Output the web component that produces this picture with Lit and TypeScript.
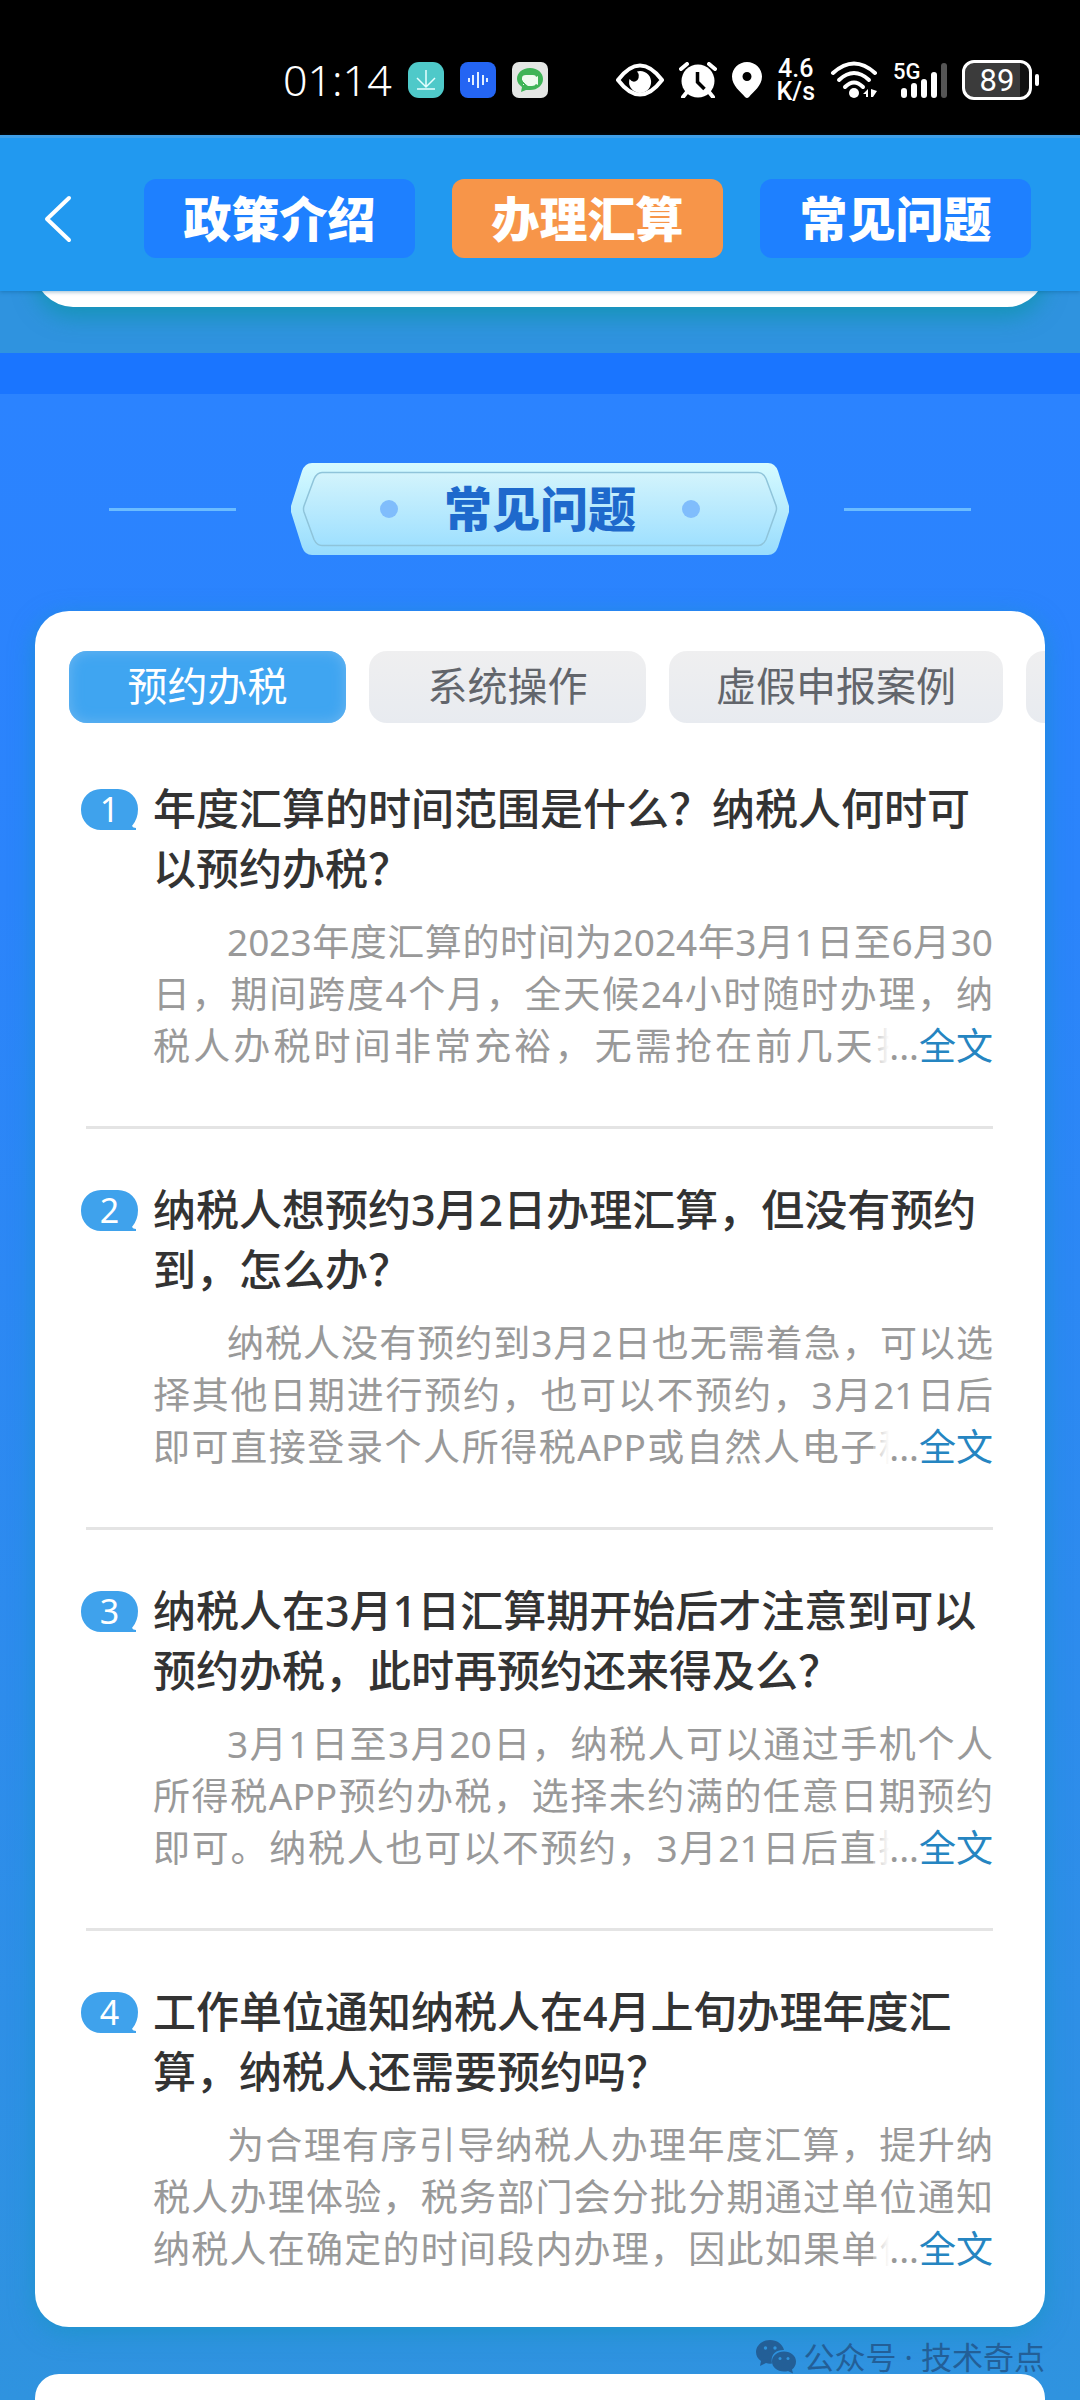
import { LitElement, html, css } from "lit";
import { customElement, property, state } from "lit/decorators.js";
import { classMap } from "lit/directives/class-map.js";

interface Faq {
  title: string[];
  body: string[];
}

const FAQS: Faq[] = [
  {
    title: ["年度汇算的时间范围是什么？纳税人何时可", "以预约办税？"],
    body: [
      "2023年度汇算的时间为2024年3月1日至6月30",
      "日，期间跨度4个月，全天候24小时随时办理，纳",
      "税人办税时间非常充裕，无需抢在前几天扎堆预",
    ],
  },
  {
    title: ["纳税人想预约3月2日办理汇算，但没有预约", "到，怎么办？"],
    body: [
      "纳税人没有预约到3月2日也无需着急，可以选",
      "择其他日期进行预约，也可以不预约，3月21日后",
      "即可直接登录个人所得税APP或自然人电子税务局",
    ],
  },
  {
    title: ["纳税人在3月1日汇算期开始后才注意到可以", "预约办税，此时再预约还来得及么？"],
    body: [
      "3月1日至3月20日，纳税人可以通过手机个人",
      "所得税APP预约办税，选择未约满的任意日期预约",
      "即可。纳税人也可以不预约，3月21日后直接登录",
    ],
  },
  {
    title: ["工作单位通知纳税人在4月上旬办理年度汇", "算，纳税人还需要预约吗？"],
    body: [
      "为合理有序引导纳税人办理年度汇算，提升纳",
      "税人办理体验，税务部门会分批分期通过单位通知",
      "纳税人在确定的时间段内办理，因此如果单位通知",
    ],
  },
];

@customElement("status-bar")
class StatusBar extends LitElement {
  static styles = css`
    :host {
      display: flex;
      align-items: center;
      justify-content: space-between;
      height: 135px;
      padding: 24px 41px 0 283px;
      box-sizing: border-box;
      background: #000;
      color: #fff;
      font-family: "Noto Sans", "Roboto", sans-serif;
    }
    .group {
      display: flex;
      align-items: center;
      gap: 16px;
    }
    .time {
      font-size: 43px;
      line-height: 48px;
      font-weight: 300;
    }
    .right {
      gap: 15px;
    }
    .speed {
      font-family: "Roboto", sans-serif;
      font-size: 25px;
      line-height: 23px;
      font-weight: 500;
      text-align: center;
    }
    svg {
      display: block;
    }
    .battery {
      display: flex;
      align-items: center;
      gap: 3px;
    }
    .cell {
      box-sizing: border-box;
      width: 70px;
      height: 40px;
      border: 3px solid #fff;
      border-radius: 12px;
      background: linear-gradient(90deg, #3b3b3b 86%, #111 86%);
      font-family: "Roboto", sans-serif;
      font-size: 31px;
      line-height: 35px;
      text-align: center;
    }
    .nub {
      width: 4px;
      height: 12px;
      border-radius: 2px;
      background: #fff;
    }
    .gen {
      font: 500 22px "Roboto", sans-serif;
      fill: #fff;
    }
  `;

  render() {
    return html`
      <div class="group">
        <span class="time">01:14</span>
        <svg width="36" height="36" viewBox="0 0 36 36">
          <rect width="36" height="36" rx="11" fill="#4fc9c9" />
          <path d="M18 8v16M9 16l9 9 9-9M9 27h18" fill="none" stroke="#e6ffff" stroke-width="1.5" />
        </svg>
        <svg width="36" height="36" viewBox="0 0 36 36">
          <rect width="36" height="36" rx="8" fill="#2465f3" />
          <path d="M9 16v4M13 13v10M18 10v16M23 13v10M27 16v4" stroke="#e2efff" stroke-width="2" />
        </svg>
        <svg width="36" height="36" viewBox="0 0 36 36">
          <rect width="36" height="36" rx="7" fill="#e4e6e4" />
          <path d="M18 6c8 0 13 5 13 11s-5 11-13 11l-4 0-5 2 1-5c-3-2-5-5-5-8C5 11 10 6 18 6z" fill="#3fb457" />
          <path d="M10 16q0-3 4-3h7q3 0 3 2l2-1v9l-2-1q-1 2-4 2h-4q-2-1-3-3l-3-3z" fill="#effbf0" />
          <path d="M11 19l3 3M11 22l1 1" stroke="#effbf0" stroke-width="1" />
        </svg>
      </div>
      <div class="group right">
        <svg width="48" height="36" viewBox="0 0 48 36">
          <path d="M2 18C11 6 18 3.500 24 3.500S37 6 46 18C37 30 30 32.500 24 32.500S11 30 2 18z" fill="none" stroke="#fff" stroke-width="4" stroke-linejoin="round" />
          <path d="M24 9a11 11 0 1 1-10.500 8q4 5 8 1 3-5-.5-8.600Q22.500 9 24 9z" fill="#fff" />
        </svg>
        <svg width="38" height="36" viewBox="0 0 38 36">
          <circle cx="19" cy="19" r="16.500" fill="#fff" />
          <path d="M2 7l6-5M36 7l-6-5M8 30l-4 5M30 30l4 5" stroke="#fff" stroke-width="4" stroke-linecap="round" />
          <path d="M18.500 10v10l7 7" fill="none" stroke="#000" stroke-width="3.500" />
        </svg>
        <svg width="30" height="36" viewBox="0 0 30 36">
          <path d="M15 0C6.700 0 0 6.700 0 14.500 0 24 9 30 13 35q2 2 4 0c4-5 13-11 13-20.500C30 6.700 23.300 0 15 0zm0 10a4.500 4.500 0 1 1 0 9 4.500 4.500 0 0 1 0-9z" fill="#fff" fill-rule="evenodd" />
        </svg>
        <div class="speed">4.6<br />K/s</div>
        <svg width="48" height="38" viewBox="0 0 48 38">
          <g fill="none" stroke="#fff" stroke-width="4" stroke-linecap="round">
            <path d="M3 12Q24-7 45 12" />
            <path d="M9 19Q24 5 39 19" />
            <path d="M15 26Q24 17 33 26" />
          </g>
          <circle cx="24" cy="32" r="5" fill="#fff" />
          <path d="M38 28v8h-2v-3h-3zM41 28l6 2-4 6h-2z" fill="#fff" />
        </svg>
        <svg width="54" height="46" viewBox="0 -4 54 46">
          <text class="gen" x="0" y="18">5G</text>
          <g stroke="#fff" stroke-width="6" stroke-linecap="round">
            <path d="M11 30v4M21 25v9M31 21v13M41 14v20" />
            <path d="M51 5v29" stroke="#555" />
          </g>
        </svg>
        <div class="battery">
          <div class="cell">89</div>
          <div class="nub"></div>
        </div>
      </div>
    `;
  }
}

@customElement("faq-item")
class FaqItem extends LitElement {
  @property({ type: Number }) index = 1;
  @property({ attribute: false }) faq!: Faq;

  static styles = css`
    :host {
      display: grid;
      grid-template-columns: 57px 1fr;
      column-gap: 15px;
    }
    .badge {
      display: grid;
      place-items: center;
      height: 41px;
      margin-top: 10px;
      font-size: 34px;
      line-height: 41px;
      color: #fff;
    }
    .badge svg,
    .badge span {
      grid-area: 1 / 1;
    }
    .badge svg {
      display: block;
    }
    h3 {
      margin: 0 0 17px;
      font-size: 43px;
      line-height: 60px;
      font-weight: 500;
      color: #333;
      white-space: nowrap;
    }
    .body {
      position: relative;
      margin: 0;
      font-size: 37px;
      line-height: 52px;
      color: #999;
    }
    .line {
      display: block;
      text-align: justify;
      text-align-last: justify;
      white-space: nowrap;
    }
    .line:first-child {
      padding-left: 2em;
    }
    .more {
      position: absolute;
      right: 0;
      bottom: 0;
      padding-left: 16px;
      background: linear-gradient(90deg, rgba(255, 255, 255, 0.3), #fff 16px);
    }
    .more a {
      color: #2585c1;
      text-decoration: none;
    }
  `;

  render() {
    return html`
      <div class="badge">
        <svg width="57" height="41" viewBox="0 0 57 41">
          <path d="M20 0h17a20 20 0 0 1 20 20q0 10-6 17 1 2 4 2v2H20A20 20 0 0 1 0 21v-1A20 20 0 0 1 20 0z" fill="#3fa2ec" />
        </svg>
        <span>${this.index}</span>
      </div>
      <div>
        <h3>${this.faq.title[0]}<br />${this.faq.title[1]}</h3>
        <p class="body">
          ${this.faq.body.map((l) => html`<span class="line">${l}</span>`)}
          <span class="more">...<a href="#faq-${this.index}">全文</a></span>
        </p>
      </div>
    `;
  }
}

@customElement("app-root")
class AppRoot extends LitElement {
  @state() private tab = 0;

  static styles = css`
    :host {
      display: flex;
      flex-direction: column;
      min-height: 100vh;
      overflow: hidden;
      font-family: "Noto Sans", "Noto Sans CJK SC", sans-serif;
    }
    button {
      font: inherit;
      border: 0;
      padding: 0;
      cursor: pointer;
    }
    .nav {
      display: flex;
      align-items: center;
      gap: 37px;
      height: 156px;
      box-sizing: border-box;
      padding: 8px 49px 0 44px;
      border-top: 3px solid #3f9fe8;
      background: #2199f0;
      box-shadow: 0 1px 4px rgba(0, 80, 130, 0.4);
      position: relative;
    }
    .back {
      background: none;
      width: 28px;
      margin-right: 35px;
    }
    .back svg,
    .plate svg {
      display: block;
    }
    .nav-btn {
      flex: 1;
      height: 79px;
      border-radius: 12px;
      background: #1e80ff;
      color: #fff;
      font-size: 48px;
      line-height: 76px;
      font-weight: 900;
      white-space: nowrap;
    }
    .nav-btn.on {
      background: #f79549;
    }
    .previous {
      height: 62px;
      padding: 0 35px;
      background: #2f93df;
      overflow: hidden;
    }
    .previous-card {
      height: 80px;
      margin-top: -64px;
      border-radius: 38px;
      background: #fff;
      box-shadow: 0 10px 22px rgba(0, 150, 150, 0.55);
    }
    .band {
      height: 41px;
      background: #1a75ff;
    }
    .faq {
      flex: 1;
      display: flex;
      flex-direction: column;
      padding: 69px 35px 0;
      background: linear-gradient(#2b83ff 0%, #2b84fb 25%, #2f93df 100%);
    }
    .heading {
      display: flex;
      align-items: center;
      justify-content: space-between;
      padding: 0 74px;
      margin-bottom: 56px;
    }
    .rule {
      width: 127px;
      height: 3px;
      background: #6bbcff;
    }
    .plate {
      display: grid;
      place-items: center;
    }
    .plate > * {
      grid-area: 1 / 1;
    }
    h2 {
      margin: 0;
      font-size: 48px;
      line-height: 92px;
      font-weight: 900;
      color: #1e69cc;
    }
    .card {
      border-radius: 34px;
      background: #fff;
      box-shadow: 0 6px 24px rgba(20, 150, 190, 0.6);
      overflow: hidden;
      padding-bottom: 52px;
    }
    .tabs {
      display: flex;
      gap: 23px;
      padding: 40px 0 0 34px;
      margin-bottom: 56px;
    }
    .tab {
      flex: none;
      min-width: 277px;
      height: 72px;
      padding: 0 47px 2px;
      border-radius: 18px;
      background: linear-gradient(#efeff0, #e8ebf0);
      color: #62656b;
      font-size: 40px;
      line-height: 66px;
      white-space: nowrap;
    }
    .tab.on {
      background: #3fa5f1;
      box-shadow: inset 0 0 14px #6cb6f0;
      color: #fff;
    }
    .list {
      margin: 0;
      padding: 0 52px 0 46px;
      list-style: none;
    }
    .divider {
      height: 3px;
      margin: 54px 0 51px 5px;
      background: #e4e4e4;
    }
    .watermark {
      display: flex;
      align-items: center;
      justify-content: flex-end;
      gap: 8px;
      height: 47px;
      box-sizing: border-box;
      padding-top: 12px;
      font-size: 31px;
      line-height: 36px;
      color: #235f97;
    }
    .next-card {
      flex: 1;
      min-height: 26px;
      border-radius: 24px 24px 0 0;
      background: #fff;
    }
  `;

  render() {
    const tabs = ["预约办税", "系统操作", "虚假申报案例", ""];
    return html`
      <status-bar></status-bar>
      <nav class="nav">
        <button class="back" aria-label="返回">
          <svg width="28" height="48" viewBox="0 0 28 48">
            <path d="M25 3L3 24l22 21" fill="none" stroke="#fff" stroke-width="4" stroke-linecap="round" stroke-linejoin="round" />
          </svg>
        </button>
        <button class="nav-btn">政策介绍</button>
        <button class="nav-btn on">办理汇算</button>
        <button class="nav-btn">常见问题</button>
      </nav>
      <div class="previous"><div class="previous-card"></div></div>
      <div class="band"></div>
      <main class="faq">
        <div class="heading">
          <span class="rule"></span>
          <div class="plate">
            <svg width="498" height="92" viewBox="0 0 498 92">
              <defs>
                <linearGradient id="outer" x2="0" y2="1">
                  <stop offset="0" stop-color="#d6fbff" />
                  <stop offset="1" stop-color="#98dcfd" />
                </linearGradient>
                <linearGradient id="inner" x2="0" y2="1">
                  <stop offset="0" stop-color="#d3f4fc" />
                  <stop offset="1" stop-color="#9fe0ff" />
                </linearGradient>
              </defs>
              <path d="M21 0H477q7 0 10 8l11 35q1 3 0 6l-11 35q-3 8-10 8H21q-7 0-10-8L0 49q-1-3 0-6L11 8Q14 0 21 0z" fill="url(#outer)" />
              <path d="M31 9.500H467q5 0 8 6l10 27q1 3 0 6l-10 28q-3 6-8 6H31q-5 0-8-6L13 49q-1-3 0-6L23 16q3-6.500 8-6.500z" fill="url(#inner)" stroke="#8fc4da" stroke-width="1.500" />
              <circle cx="98" cy="46" r="9" fill="#80bdfc" />
              <circle cx="400" cy="46" r="9" fill="#80bdfc" />
            </svg>
            <h2>常见问题</h2>
          </div>
          <span class="rule"></span>
        </div>
        <section class="card">
          <div class="tabs">
            ${tabs.map(
              (t, i) => html`<button
                class=${classMap({ tab: true, on: i === this.tab })}
                aria-label=${t || "更多"}
                @click=${() => (this.tab = i)}
              >${t}</button>`
            )}
          </div>
          <ol class="list">
            ${FAQS.map(
              (f, i) => html`<li>
                ${i ? html`<div class="divider"></div>` : ""}
                <faq-item .index=${i + 1} .faq=${f}></faq-item>
              </li>`
            )}
          </ol>
        </section>
        <div class="watermark">
          <svg width="40" height="34" viewBox="0 0 40 34">
            <path d="M14 0C6 0 0 5.500 0 12c0 4 2 7 5 9l-1 5 6-3q3 1 6 .5C14 15 20 9.500 28 10 26.500 4 21 0 14 0z" fill="#235f97" />
            <path d="M28 11.500c-7 0-12 4.500-12 10s5 10 12 10q2 0 4-.5l5 2.500-1-4c2.500-2 4-4.500 4-8 0-5.500-5-10-12-10z" fill="#235f97" />
            <g fill="#2f93dc">
              <circle cx="9.500" cy="8" r="1.700" />
              <circle cx="19" cy="8" r="1.700" />
              <circle cx="24" cy="18.500" r="1.500" />
              <circle cx="32" cy="18.500" r="1.500" />
            </g>
          </svg>
          <span>公众号 · 技术奇点</span>
        </div>
        <div class="next-card"></div>
      </main>
    `;
  }
}
